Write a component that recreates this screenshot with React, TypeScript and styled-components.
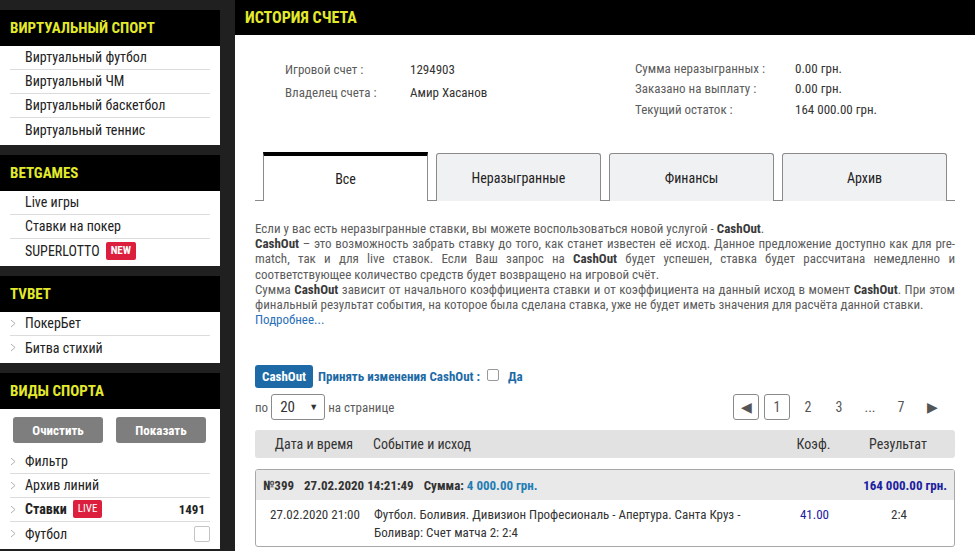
import React from "react";
import styled, { createGlobalStyle } from "styled-components";

const GlobalStyle = createGlobalStyle`
  html, body {
    margin: 0;
    padding: 0;
    background: #202020;
  }
  body {
    font-family: Roboto, "Liberation Sans", sans-serif;
    font-stretch: 87.5%;
    color: #333;
  }
  * {
    box-sizing: border-box;
  }
`;

const color = {
  yellow: "#e3ea2c",
  text: "#333",
  muted: "#5c5c5c",
  line: "#dcdcdc",
  red: "#dc1f3d",
  blue: "#1d6aa6",
  link: "#2a6fba",
  navy: "#1c20a0",
  teal: "#1f7db4",
  border: "#8a8a8a",
};

const Page = styled.div`
  display: flex;
  gap: 15px;
  width: 975px;
  height: 551px;
  overflow: hidden;
`;

/* ---------- sidebar ---------- */

const Sidebar = styled.aside`
  width: 220px;
  flex-shrink: 0;
  padding-top: 10px;
  display: flex;
  flex-direction: column;
  gap: 10px;
`;

const BlockTitle = styled.div`
  height: 36px;
  background: #000;
  color: ${color.yellow};
  font-weight: 700;
  font-size: 15px;
  text-transform: uppercase;
  padding-left: 10px;
  display: flex;
  align-items: center;
`;

const BlockBody = styled.ul`
  margin: 0;
  padding: 0 10px 3px;
  list-style: none;
  background: #fff;
`;

const Item = styled.li<{ $bold?: boolean }>`
  height: 24px;
  display: flex;
  align-items: center;
  gap: 6px;
  padding-left: 15px;
  padding-bottom: 1px;
  font-size: 14px;
  font-weight: ${(p) => (p.$bold ? 700 : 400)};
  color: #222;
  border-bottom: 1px solid ${color.line};
  position: relative;

  &:last-child {
    border-bottom: none;
  }
`;

const Chevron = styled.svg`
  position: absolute;
  left: 0;
  top: 7px;
`;

const Badge = styled.span<{ $bold?: boolean }>`
  background: ${color.red};
  color: #fff;
  font-size: 11px;
  font-weight: ${(p) => (p.$bold ? 700 : 400)};
  padding: 2px 5px;
  border-radius: 2px;
  line-height: 14px;
`;

const Count = styled.span`
  margin-left: auto;
  font-weight: 700;
  font-size: 13px;
  padding-right: 5px;
`;

const Check = styled.span`
  margin-left: auto;
  width: 16px;
  height: 16px;
  border: 1px solid #c4c4c4;
  border-radius: 2px;
`;

const ButtonRow = styled.div`
  display: flex;
  justify-content: space-between;
  padding: 8px 4px 7px 3px;
`;

const GreyButton = styled.button`
  width: 90px;
  height: 26px;
  border: none;
  border-radius: 3px;
  background: #7e7e7e;
  color: #fff;
  font: inherit;
  font-size: 13px;
  font-weight: 700;
`;

function Arrow() {
  return (
    <Chevron width="6" height="9" viewBox="0 0 6 9">
      <path d="M1 1 L5 4.5 L1 8" fill="none" stroke="#b0b0b0" strokeWidth="1" />
    </Chevron>
  );
}

/* ---------- main ---------- */

const Main = styled.main`
  flex: 1;
  background: #fff;
  display: flex;
  flex-direction: column;
`;

const MainHeader = styled.h1`
  margin: 0;
  height: 35px;
  background: #000;
  color: ${color.yellow};
  font-size: 16px;
  font-weight: 700;
  padding-left: 10px;
  display: flex;
  align-items: center;
`;

const Info = styled.div`
  display: flex;
  padding: 23px 0 0 50px;
  height: 117px;
`;

const InfoGrid = styled.div<{ $width: number; $label: number; $row: number }>`
  width: ${(p) => p.$width}px;
  display: grid;
  grid-template-columns: ${(p) => p.$label}px auto;
  grid-auto-rows: ${(p) => p.$row}px;
  align-items: center;
  align-content: start;
  font-size: 13px;
`;

const Label = styled.span`
  color: ${color.muted};
`;

const Value = styled.span`
  color: ${color.text};
`;

const Tabs = styled.div`
  display: flex;
  gap: 8px;
  margin: 0 20px;
  padding: 0 8px;
  border-bottom: 1px solid ${color.border};
  height: 49px;
`;

const Tab = styled.div<{ $active?: boolean }>`
  width: 165px;
  height: ${(p) => (p.$active ? 49 : 48)}px;
  margin-top: ${(p) => (p.$active ? 0 : 1)}px;
  display: flex;
  align-items: center;
  justify-content: center;
  font-size: 14px;
  color: #222;
  background: ${(p) => (p.$active ? "#fff" : "#f0f1f3")};
  border: 1px solid ${color.border};
  border-top: ${(p) => (p.$active ? "4px solid #000" : `1px solid ${color.border}`)};
  border-bottom: none;
  border-radius: ${(p) => (p.$active ? "0" : "3px 3px 0 0")};
  margin-bottom: ${(p) => (p.$active ? -1 : 0)}px;
  position: relative;
`;

const Notice = styled.div`
  margin: 20px 20px 0;
  font-size: 13px;
  line-height: 15.2px;
  color: ${color.muted};
  text-align: justify;

  b {
    color: #3a3a3a;
  }
`;

const Link = styled.a`
  color: ${color.link};
  text-decoration: none;
`;

const Controls = styled.div`
  margin: 38px 20px 0;
  display: flex;
  flex-direction: column;
  gap: 6px;
`;

const CashRow = styled.div`
  display: flex;
  align-items: center;
  gap: 5px;
  height: 23px;
  font-size: 13px;
  font-weight: 700;
  color: ${color.blue};
`;

const CashButton = styled.span`
  background: ${color.blue};
  color: #fff;
  height: 23px;
  width: 58px;
  border-radius: 3px;
  display: flex;
  align-items: center;
  justify-content: center;
`;

const SmallBox = styled.span`
  width: 12px;
  height: 12px;
  margin: 0 4px 0 2px;
  border: 1px solid #999;
  border-radius: 2px;
  background: #fff;
  position: relative;
  top: -2px;
`;

const PagerRow = styled.div`
  display: flex;
  align-items: center;
  height: 26px;
  font-size: 13px;
  color: ${color.muted};
`;

const Select = styled.span`
  width: 54px;
  height: 26px;
  margin: 0 3px;
  border: 1px solid ${color.border};
  border-radius: 3px;
  display: flex;
  align-items: center;
  justify-content: space-between;
  padding: 0 6px 0 8px;
  font-size: 15px;
  color: #333;

  small {
    font-size: 9px;
  }
`;

const Pager = styled.div`
  margin-left: auto;
  margin-right: 10px;
  display: flex;
  gap: 5px;
`;

const PageItem = styled.span<{ $boxed?: boolean }>`
  width: 26px;
  height: 26px;
  display: flex;
  align-items: center;
  justify-content: center;
  font-size: 14px;
  color: #555;
  border: 1px solid ${(p) => (p.$boxed ? color.border : "transparent")};
  border-radius: 3px;
`;

const Columns = "118px 396px 89px 80px";

const TableHead = styled.div`
  margin: 10px 20px 0;
  height: 28px;
  background: #e2e2e2;
  border-radius: 3px;
  display: grid;
  grid-template-columns: ${Columns};
  align-items: center;
  font-size: 14px;
  color: #333;
`;

const Cell = styled.span<{ $center?: boolean; $color?: string }>`
  text-align: ${(p) => (p.$center ? "center" : "left")};
  color: ${(p) => p.$color || "inherit"};
`;

const Card = styled.div`
  margin: 11px 20px 0;
  border: 1px solid #a8a8a8;
  border-radius: 3px;
  overflow: hidden;
`;

const CardHead = styled.div`
  height: 30px;
  background: #e9e9e9;
  display: flex;
  align-items: center;
  gap: 10px;
  padding: 0 7px;
  font-size: 13px;
  font-weight: 700;
  color: #333;
`;

const Amount = styled.span<{ $color: string }>`
  color: ${(p) => p.$color};
`;

const Total = styled(Amount)`
  margin-left: auto;
`;

const CardRow = styled.div`
  display: grid;
  grid-template-columns: ${Columns};
  align-items: start;
  padding: 6px 0 4px;
  font-size: 13px;
  line-height: 18px;
  color: #333;
`;

export default function App() {
  return (
    <>
      <GlobalStyle />
      <Page>
        <Sidebar>
          <section>
            <BlockTitle>Виртуальный спорт</BlockTitle>
            <BlockBody>
              <Item>Виртуальный футбол</Item>
              <Item>Виртуальный ЧМ</Item>
              <Item>Виртуальный баскетбол</Item>
              <Item>Виртуальный теннис</Item>
            </BlockBody>
          </section>
          <section>
            <BlockTitle>BetGames</BlockTitle>
            <BlockBody>
              <Item>Live игры</Item>
              <Item>Ставки на покер</Item>
              <Item>
                SUPERLOTTO <Badge $bold>NEW</Badge>
              </Item>
            </BlockBody>
          </section>
          <section>
            <BlockTitle>TVBET</BlockTitle>
            <BlockBody>
              <Item>
                <Arrow />
                ПокерБет
              </Item>
              <Item>
                <Arrow />
                Битва стихий
              </Item>
            </BlockBody>
          </section>
          <section>
            <BlockTitle>Виды спорта</BlockTitle>
            <BlockBody>
              <ButtonRow>
                <GreyButton>Очистить</GreyButton>
                <GreyButton>Показать</GreyButton>
              </ButtonRow>
              <Item>
                <Arrow />
                Фильтр
              </Item>
              <Item>
                <Arrow />
                Архив линий
              </Item>
              <Item $bold>
                <Arrow />
                Ставки <Badge>LIVE</Badge>
                <Count>1491</Count>
              </Item>
              <Item>
                <Arrow />
                Футбол
                <Check />
              </Item>
            </BlockBody>
          </section>
        </Sidebar>

        <Main>
          <MainHeader>ИСТОРИЯ СЧЕТА</MainHeader>
          <Info>
            <InfoGrid $width={350} $label={125} $row={23}>
              <Label>Игровой счет :</Label>
              <Value>1294903</Value>
              <Label>Владелец счета :</Label>
              <Value>Амир Хасанов</Value>
            </InfoGrid>
            <InfoGrid $width={300} $label={160} $row={20.5}>
              <Label>Сумма неразыгранных :</Label>
              <Value>0.00 грн.</Value>
              <Label>Заказано на выплату :</Label>
              <Value>0.00 грн.</Value>
              <Label>Текущий остаток :</Label>
              <Value>164 000.00 грн.</Value>
            </InfoGrid>
          </Info>

          <Tabs>
            <Tab $active>Все</Tab>
            <Tab>Неразыгранные</Tab>
            <Tab>Финансы</Tab>
            <Tab>Архив</Tab>
          </Tabs>

          <Notice>
            Если у вас есть неразыгранные ставки, вы можете воспользоваться новой услугой - <b>CashOut</b>.
            <br />
            <b>CashOut</b> – это возможность забрать ставку до того, как станет известен её исход. Данное
            предложение доступно как для pre-match, так и для live ставок. Если Ваш запрос на <b>CashOut</b>{" "}
            будет успешен, ставка будет рассчитана немедленно и соответствующее количество средств будет
            возвращено на игровой счёт.
            <br />
            Сумма <b>CashOut</b> зависит от начального коэффициента ставки и от коэффициента на данный исход в
            момент <b>CashOut</b>. При этом финальный результат события, на которое была сделана ставка, уже не
            будет иметь значения для расчёта данной ставки.
            <br />
            <Link>Подробнее...</Link>
          </Notice>

          <Controls>
            <CashRow>
              <CashButton>CashOut</CashButton>
              Принять изменения CashOut :
              <SmallBox />
              Да
            </CashRow>
            <PagerRow>
              по
              <Select>
                20 <small>▼</small>
              </Select>
              на странице
              <Pager>
                <PageItem $boxed>◀</PageItem>
                <PageItem $boxed>1</PageItem>
                <PageItem>2</PageItem>
                <PageItem>3</PageItem>
                <PageItem>...</PageItem>
                <PageItem>7</PageItem>
                <PageItem>▶</PageItem>
              </Pager>
            </PagerRow>
          </Controls>

          <TableHead>
            <Cell $center>Дата и время</Cell>
            <Cell>Событие и исход</Cell>
            <Cell $center>Коэф.</Cell>
            <Cell $center>Результат</Cell>
          </TableHead>

          <Card>
            <CardHead>
              <span>№399</span>
              <span>27.02.2020 14:21:49</span>
              <span>
                Сумма: <Amount $color={color.teal}>4 000.00 грн.</Amount>
              </span>
              <Total $color={color.navy}>164 000.00 грн.</Total>
            </CardHead>
            <CardRow>
              <Cell $center>27.02.2020 21:00</Cell>
              <Cell>
                Футбол. Боливия. Дивизион Професиональ - Апертура. Санта Круз -
                <br />
                Боливар: Счет матча 2: 2:4
              </Cell>
              <Cell $center $color={color.navy}>
                41.00
              </Cell>
              <Cell $center>2:4</Cell>
            </CardRow>
          </Card>
        </Main>
      </Page>
    </>
  );
}
